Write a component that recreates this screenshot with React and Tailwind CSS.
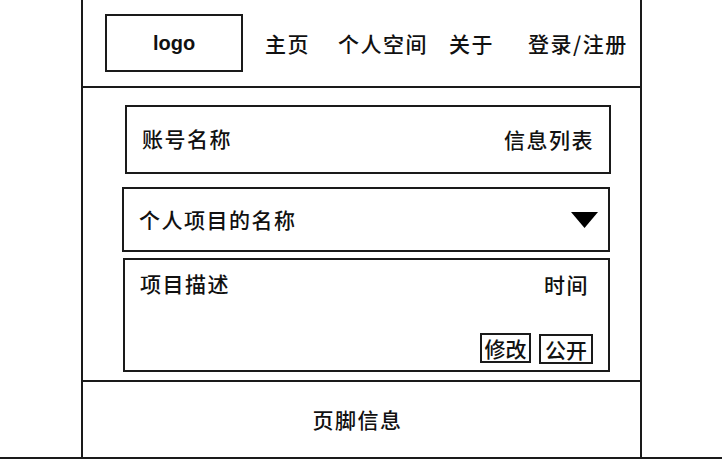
import React from "react";

const cjk = "font-['Noto_Sans_CJK_SC','Noto_Sans',sans-serif]";

export default function App() {
  return (
    <div className={`h-[459px] w-[722px] bg-white border-b-2 border-[#1a1a1a] flex flex-col text-[#111] font-medium ${cjk}`}>
      <div className="ml-[81px] w-[561px] flex-1 border-x-2 border-[#1a1a1a] flex flex-col">
        {/* header */}
        <div className="h-[88px] border-b-2 border-[#1a1a1a] flex items-center pl-[22px]">
          <div className="w-[138px] h-[58px] border-2 border-[#1a1a1a] flex items-center justify-center">
            <span className="font-['Liberation_Sans',sans-serif] font-bold text-[20px] leading-none">logo</span>
          </div>
          <nav className="flex items-center text-[21px] tracking-[1.5px] leading-none">
            <span className="ml-[22px]">主页</span>
            <span className="ml-[28px]">个人空间</span>
            <span className="ml-[21px]">关于</span>
            <span className="ml-[34px]">登录/注册</span>
          </nav>
        </div>

        {/* main */}
        <div className="flex-1 flex flex-col pt-[17px]">
          <div className="ml-[42px] w-[486px] h-[69px] border-2 border-[#1a1a1a] flex items-center justify-between pl-[15px] pr-[15px] text-[21px] tracking-[1.5px] leading-none">
            <span className="-mt-[2px]">账号名称</span>
            <span>信息列表</span>
          </div>

          <div className="mt-[13px] ml-[39px] w-[488px] h-[65px] border-2 border-[#1a1a1a] flex items-center justify-between pl-[15px] pr-[10px] text-[21px] tracking-[1.5px] leading-none">
            <span>个人项目的名称</span>
            <svg width="27" height="16" viewBox="0 0 27 16" className="mt-[1px]">
              <polygon points="0,0 27,0 13.5,16" fill="#000" />
            </svg>
          </div>

          <div className="mt-[6px] ml-[40px] w-[487px] h-[114px] border-2 border-[#1a1a1a] flex flex-col pl-[15px] pr-[14px] pt-[13px] pb-[7px] text-[21px] tracking-[1.5px] leading-none">
            <div className="flex justify-between">
              <span>项目描述</span>
              <span className="mt-[1px] mr-[5px]">时间</span>
            </div>
            <div className="mt-auto flex justify-end items-end gap-[8px]">
              <span className="w-[51px] h-[30px] border-2 border-[#1a1a1a] flex items-center justify-center text-[21px] tracking-[0px]">修改</span>
              <span className="w-[54px] h-[30px] border-2 border-[#1a1a1a] flex items-center justify-center text-[21px] tracking-[0px] mr-[1px] translate-y-[1px]">公开</span>
            </div>
          </div>
        </div>

        {/* footer */}
        <div className="h-[77px] border-t-2 border-[#1a1a1a] flex items-center justify-center pr-[8px] text-[21px] tracking-[1.5px] leading-none">
          <span className="-mt-[1px]">页脚信息</span>
        </div>
      </div>
    </div>
  );
}
